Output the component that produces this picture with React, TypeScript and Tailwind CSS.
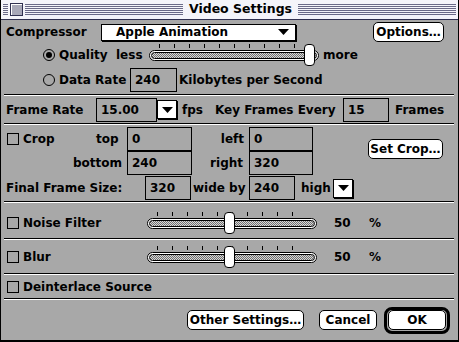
import React from "react";

const Sep = () => (
  <div className="mx-[3px] w-[450px] h-[2px] border-t border-black bg-white" />
);

const Field = ({ value, w }: { value: string; w: string }) => (
  <div className={`${w} h-[24px] border border-black flex items-center pl-[4px]`}>{value}</div>
);

const ArrowBox = () => (
  <div className="w-[20px] h-[19px] bg-white border border-black shadow-[1px_1px_0_#000] flex items-center justify-center">
    <svg width="11" height="6" viewBox="0 0 11 6">
      <path d="M0 0h11L5.5 6z" fill="#000" />
    </svg>
  </div>
);

const Radio = ({ on }: { on?: boolean }) => (
  <div className="w-[12px] h-[12px] rounded-full border border-black flex items-center justify-center">
    {on && <div className="w-[6px] h-[6px] rounded-full bg-black" />}
  </div>
);

const Check = () => <div className="w-[12px] h-[12px] border border-black" />;

const MacButton = ({ label, w }: { label: string; w: string }) => (
  <div className={`${w} h-[20px] bg-white border border-black rounded-[5px] flex items-center justify-center`}>
    {label}
  </div>
);

const Slider = ({ pos }: { pos: number }) => (
  <div className="relative w-[170px] h-[22px]">
    <div className="absolute left-[10px] top-0 flex gap-[14px]">
      {Array.from({ length: 10 }).map((_, i) => (
        <div key={i} className="w-px h-[4px] bg-black" />
      ))}
    </div>
    <div className="absolute left-0 top-[6px] w-[170px] h-[11px] rounded-full border border-black bg-white p-px">
      <div className="w-full h-full rounded-full border border-black bg-[repeating-conic-gradient(#707070_0_25%,#d8d8d8_0_50%)] bg-[length:2px_2px]" />
    </div>
    <div
      className="absolute top-[0px] w-[11px] h-[22px] bg-white border border-black rounded-[4px]"
      style={{ left: pos }}
    />
  </div>
);

const stripes =
  "h-[11px] bg-[repeating-linear-gradient(to_bottom,#6a6a88_0_1px,transparent_1px_2px)]";

export default function App() {
  return (
    <div
      className="w-[459px] h-[342px] bg-[#a8a8a8] border-l border-r border-b-2 border-black text-[12px] font-bold text-black leading-none flex flex-col"
      style={{ fontFamily: '"DejaVu Sans", sans-serif' }}
    >
      {/* title bar */}
      <div className="h-[20px] bg-[#f4f4fa] border-b border-[#303050] flex items-center px-[2px] gap-[2px]">
        <div className={`w-[5px] ${stripes}`} />
        <div className="w-[13px] h-[13px] border border-[#303050] bg-[#a8a8b8] shadow-[inset_1px_1px_0_#fff]" />
        <div className={`flex-1 ${stripes}`} />
        <div className="px-[4px] text-[12.5px]">Video Settings</div>
        <div className={`flex-1 ${stripes}`} />
      </div>

      {/* compressor */}
      <div className="h-[24px] flex items-center pl-[5px]">
        <span className="w-[95px]">Compressor</span>
        <div className="w-[195px] h-[17px] bg-white border border-black shadow-[1px_1px_0_#000] flex items-center pl-[14px] pr-[6px]">
          <span className="flex-1">Apple Animation</span>
          <svg width="11" height="6" viewBox="0 0 11 6">
            <path d="M0 0h11L5.5 6z" fill="#000" />
          </svg>
        </div>
        <div className="ml-[77px]">
          <MacButton label="Options…" w="w-[71px]" />
        </div>
      </div>

      {/* quality */}
      <div className="h-[22px] flex items-center pl-[42px]">
        <Radio on />
        <span className="ml-[4px] w-[57px]">Quality</span>
        <span className="w-[33px]">less</span>
        <Slider pos={155} />
        <span className="ml-[4px]">more</span>
      </div>

      {/* data rate */}
      <div className="h-[28px] flex items-center pl-[42px]">
        <Radio />
        <span className="ml-[4px] w-[71px]">Data Rate</span>
        <Field value="240" w="w-[47px]" />
        <span className="ml-[2px]">Kilobytes per Second</span>
      </div>

      <Sep />

      {/* frame rate */}
      <div className="h-[27px] flex items-center pl-[5px]">
        <span className="w-[90px]">Frame Rate</span>
        <Field value="15.00" w="w-[61px]" />
        <ArrowBox />
        <span className="ml-[5px] w-[33px]">fps</span>
        <span className="w-[128px]">Key Frames Every</span>
        <Field value="15" w="w-[46px]" />
        <span className="ml-[6px]">Frames</span>
      </div>

      <Sep />

      {/* crop */}
      <div className="flex pl-[6px] pt-[2px]">
        <div className="flex flex-col">
          <div className="h-[24px] flex items-center">
            <Check />
            <span className="ml-[4px] w-[73px]">Crop</span>
            <span className="w-[31px] text-right pr-[9px]">top</span>
            <Field value="0" w="w-[65px]" />
            <span className="w-[57px] text-right pr-[5px]">left</span>
            <Field value="0" w="w-[64px]" />
          </div>
          <div className="h-[24px] flex items-center">
            <span className="w-[120px] text-right pr-[5px]">bottom</span>
            <Field value="240" w="w-[65px]" />
            <span className="w-[57px] text-right pr-[6px]">right</span>
            <Field value="320" w="w-[64px]" />
          </div>
        </div>
        <div className="ml-[55px] mt-[12px]">
          <MacButton label="Set Crop…" w="w-[75px]" />
        </div>
      </div>

      {/* final frame size */}
      <div className="h-[26px] flex items-center pl-[5px]">
        <span className="w-[139px]">Final Frame Size:</span>
        <Field value="320" w="w-[46px]" />
        <span className="w-[58px] pl-[2px]">wide by</span>
        <Field value="240" w="w-[46px]" />
        <span className="ml-[6px] w-[32px]">high</span>
        <ArrowBox />
      </div>

      <Sep />

      {/* noise */}
      <div className="h-[35px] pt-[4px] flex items-center pl-[6px]">
        <Check />
        <span className="ml-[4px] w-[124px]">Noise Filter</span>
        <Slider pos={77} />
        <span className="ml-[17px] w-[35px]">50</span>
        <span>%</span>
      </div>

      <Sep />

      {/* blur */}
      <div className="h-[33px] flex items-center pl-[6px]">
        <Check />
        <span className="ml-[4px] w-[124px]">Blur</span>
        <Slider pos={77} />
        <span className="ml-[17px] w-[35px]">50</span>
        <span>%</span>
      </div>

      <Sep />

      {/* deinterlace */}
      <div className="h-[23px] flex items-center pl-[6px]">
        <Check />
        <span className="ml-[4px]">Deinterlace Source</span>
      </div>

      <Sep />

      {/* buttons */}
      <div className="flex-1 flex items-center justify-end pr-[8px] gap-[15px]">
        <MacButton label="Other Settings…" w="w-[117px]" />
        <MacButton label="Cancel" w="w-[58px]" />
        <div className="w-[66px] h-[27px] border-[3px] border-black rounded-[8px] flex items-center justify-center -ml-[8px]">
          <MacButton label="OK" w="w-[58px]" />
        </div>
      </div>
    </div>
  );
}
